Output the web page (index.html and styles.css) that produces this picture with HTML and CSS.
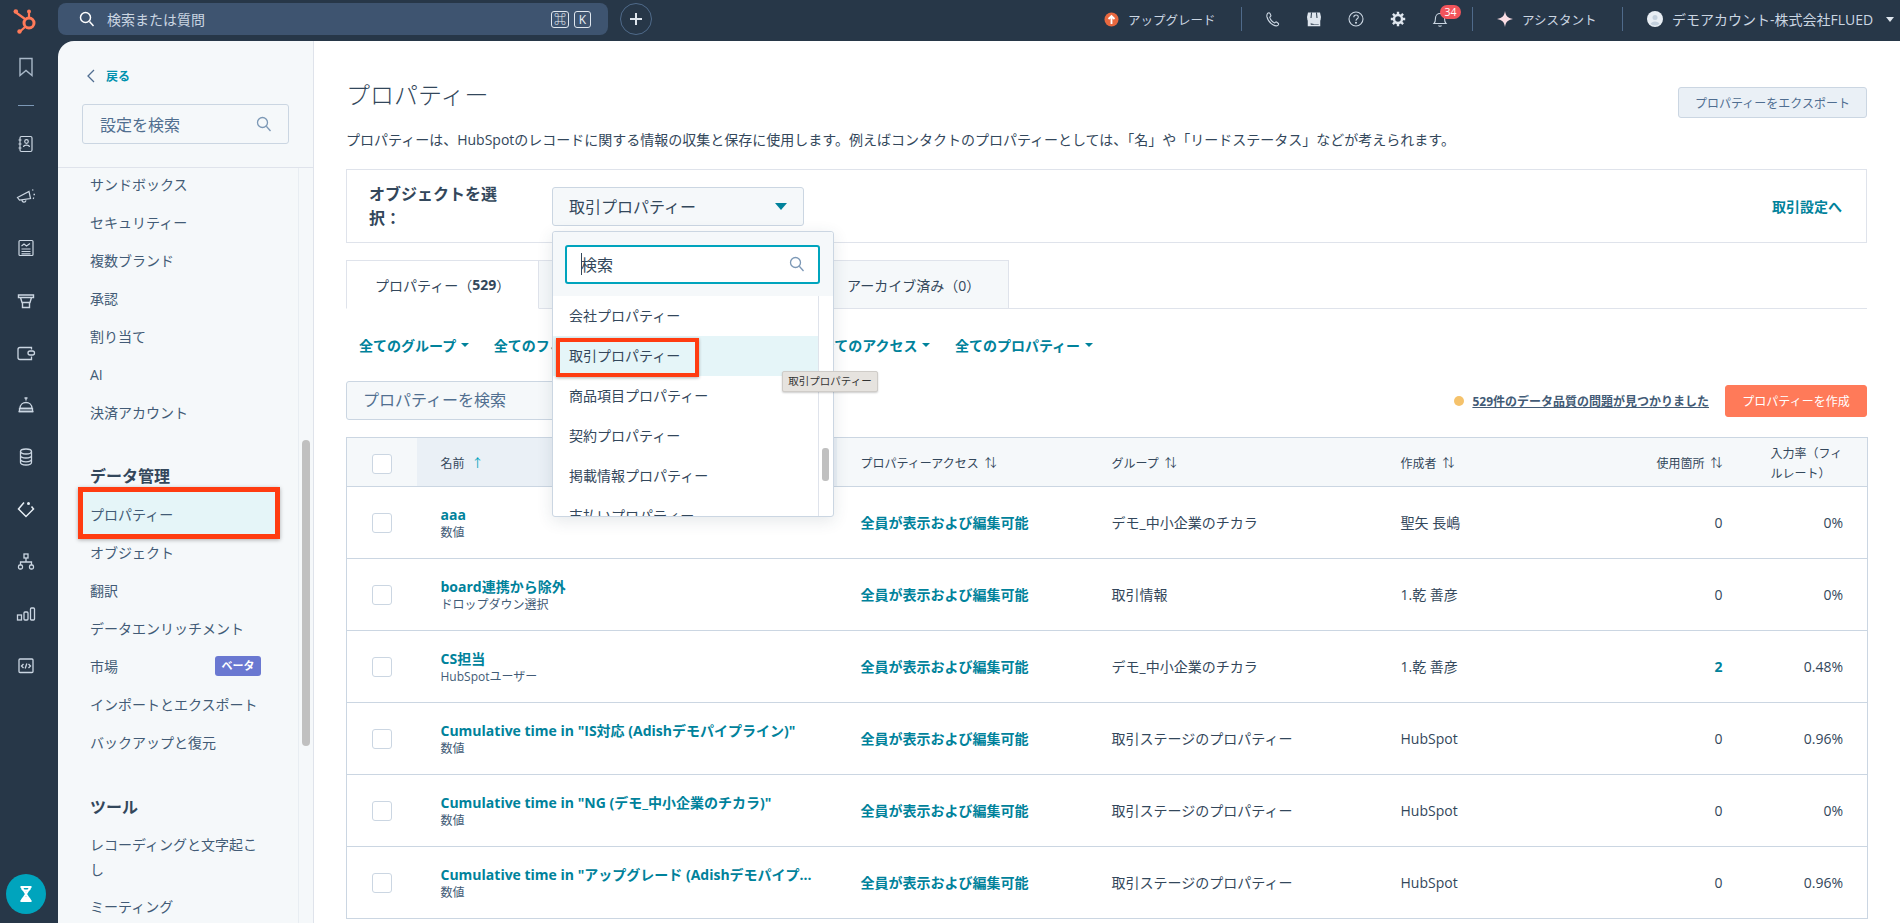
FILE: index.html
```html
<!DOCTYPE html>
<html lang="ja">
<head>
<meta charset="utf-8">
<title>プロパティー</title>
<link rel="stylesheet" href="styles.css">
</head>
<body>
<aside class="rail">
  <svg class="logo" width="24" height="26" viewBox="0 0 24 26" fill="none"><circle cx="16" cy="15" r="5" stroke="#ff7a59" stroke-width="3"/><path d="M16 9V4M12 11 3 4.500M12 19l-5 4.500" stroke="#ff7a59" stroke-width="2.200"/><circle cx="16" cy="3.500" r="2" fill="#ff7a59"/><circle cx="2.800" cy="3.500" r="2.300" fill="#ff7a59"/><circle cx="6.500" cy="23.500" r="2.200" fill="#ff7a59"/></svg>
  <div class="rail-icon first"><svg width="24" height="24" viewBox="0 0 24 24" fill="none" stroke="#a9b8c8" stroke-width="1.400"><path d="M6 3.500h12v17l-6-5-6 5z"/></svg></div>
  <div class="rail-rule"></div>
  <div class="rail-icon contacts"><svg width="24" height="24" viewBox="0 0 24 24" fill="none" stroke="#cbd6e2" stroke-width="1.200"><rect x="6" y="4.500" width="12" height="15" rx="1.500"/><circle cx="12.500" cy="9.500" r="1.800"/><path d="M9.500 15c.5-2.500 5.500-2.500 6 0M4.500 8h3M4.500 12h3M4.500 16h3"/></svg></div>
  <div class="rail-icon"><svg width="24" height="24" viewBox="0 0 24 24" fill="none" stroke="#cbd6e2" stroke-width="1.200"><path d="M3.500 13.500 15 7.500l1.500 7-11 1.500zM8 15.800c0 3 3.500 3 4 .5"/><path d="M18.500 6.500l.5-1M19.500 10.500h1.500M19 14l1 .5" stroke-width="1.400"/></svg></div>
  <div class="rail-icon"><svg width="24" height="24" viewBox="0 0 24 24" fill="none" stroke="#cbd6e2" stroke-width="1.200"><rect x="5" y="4.500" width="14" height="15" rx="1"/><path d="M7.500 10l2.500-2 2.500 2 3.500-2.500M7.500 13h9M7.500 15.500h9M7.500 17.800h9"/></svg></div>
  <div class="rail-icon"><svg width="24" height="24" viewBox="0 0 24 24" fill="none" stroke="#cbd6e2" stroke-width="1.400"><path d="M4.500 6h15v2.500h-15zM6.500 8.500l1.500 5h8l1.500-5M8.500 13.500v5h7v-5"/></svg></div>
  <div class="rail-icon"><svg width="24" height="24" viewBox="0 0 24 24" fill="none" stroke="#cbd6e2" stroke-width="1.300"><path d="M17.500 8.500V6.500H6a2 2 0 0 0-2 2v8a2 2 0 0 0 2 2h11.500v-3"/><rect x="14" y="10" width="6.500" height="4" rx="2"/></svg></div>
  <div class="rail-icon"><svg width="24" height="24" viewBox="0 0 24 24" fill="none" stroke="#cbd6e2" stroke-width="1.300"><path d="M6 15.500c0-8 12-8 12 0zM12 7.500V5M10.500 5h3M4.500 18.500h15"/><path d="M5.500 15.500h13v3h-13z"/></svg></div>
  <div class="rail-icon"><svg width="24" height="24" viewBox="0 0 24 24" fill="none" stroke="#cbd6e2" stroke-width="1.300"><ellipse cx="12" cy="6.500" rx="5.500" ry="2.500"/><path d="M6.500 6.500v11c0 3.300 11 3.300 11 0v-11M6.500 10.500c0 3.300 11 3.300 11 0M6.500 14.300c0 3.300 11 3.300 11 0"/></svg></div>
  <div class="rail-icon"><svg width="24" height="24" viewBox="0 0 24 24" fill="none" stroke="#e6edf4" stroke-width="1.500"><path d="M10 5.500 4.500 12l7.500 7.500 7.500-7.500-2-2.500"/><circle cx="14.500" cy="6.500" r="1.500" fill="#e6edf4" stroke="none"/></svg></div>
  <div class="rail-icon"><svg width="24" height="24" viewBox="0 0 24 24" fill="none" stroke="#cbd6e2" stroke-width="1.300"><rect x="10" y="4" width="4" height="4"/><rect x="4.500" y="15" width="4" height="4" rx="1.500"/><rect x="15.500" y="15" width="4" height="4" rx="1.500"/><path d="M12 8v4M6.500 15v-3h11v3"/></svg></div>
  <div class="rail-icon"><svg width="24" height="24" viewBox="0 0 24 24" fill="none" stroke="#cbd6e2" stroke-width="1.300"><rect x="3.500" y="13" width="4" height="5"/><rect x="10" y="10" width="4" height="8" rx="1"/><rect x="16.500" y="6" width="4" height="12" rx="1"/></svg></div>
  <div class="rail-icon"><svg width="24" height="24" viewBox="0 0 24 24" fill="none" stroke="#cbd6e2" stroke-width="1.300"><rect x="5" y="5" width="14" height="13.500" rx="1"/><path d="M9.500 10l-2 2 2 2M14.500 10l2 2-2 2M12.800 9.500l-1.600 5"/></svg></div>
  <div class="rail-timer"><svg width="20" height="20" viewBox="0 0 20 20" fill="none" stroke="#fff" stroke-width="2"><path d="M4.500 3h11M4.500 17h11M6 3.500c0 4 8 4 8 0M6 3.500 14 16.500M14 3.500 6 16.500"/><path d="M6 16.500c1-4 7-4 8 0z" fill="#fff"/></svg></div>
</aside>

<div class="shell">
  <header class="topbar">
    <div class="global-search">
      <svg width="18" height="18" viewBox="0 0 18 18" fill="none" stroke="#fff" stroke-width="1.500"><circle cx="7.500" cy="7.500" r="5"/><path d="m11.500 11.500 4 4.500"/></svg>
      <span class="global-search-text">検索または質問</span>
      <span class="kbd">⌘</span><span class="kbd">K</span>
    </div>
    <div class="plus"><svg width="14" height="14" viewBox="0 0 14 14" stroke="#dfe6ee" stroke-width="2"><path d="M7 1v12M1 7h12"/></svg></div>
    <div class="top-right">
      <svg class="upgrade-icon" width="15" height="15" viewBox="0 0 15 15"><circle cx="7.500" cy="7.500" r="7" fill="#e8683f"/><path d="M7.500 12V4M4.500 7l3-3 3 3" stroke="#fff" stroke-width="1.800" fill="none"/></svg>
      <span class="top-text upgrade">アップグレード</span>
      <span class="top-div"></span>
      <svg class="ti phone" width="16" height="16" viewBox="0 0 16 16" fill="none" stroke="#cbd6e2" stroke-width="1.100"><path d="M2.500 2.500c1-1 2-1 2.500 0l.8 1.700c.2.500 0 1-.5 1.400l-.6.500c.6 2.500 2.500 4.800 5 5.800l.7-.6c.4-.4 1-.4 1.400-.1l1.300 1c.8.600.6 1.600-.2 2.200-1 .8-3 .5-5-.7-3.500-2-5.500-5.500-6-8-.2-1.300.1-2.400.6-3.200z"/></svg>
      <svg class="ti store" width="16" height="16" viewBox="0 0 16 16"><path d="M2 1.500h12l1 4.500a2 2 0 0 1-14 0z" fill="#dfe6ee"/><path d="M5.500 1.500 5 7M10.500 1.500l.5 5.500" stroke="#253648" stroke-width="1"/><path d="M2.500 8h11v6.500h-11zM4 9.500v5M8.500 9.500h3.500v3H8.500z" fill="none" stroke="#dfe6ee" stroke-width="1.500"/></svg>
      <svg class="ti help" width="16" height="16" viewBox="0 0 16 16" fill="none" stroke="#cbd6e2" stroke-width="1.100"><circle cx="8" cy="8" r="7"/><path d="M5.800 6.200c0-3 4.500-2.800 4.500-.2 0 1.800-2.300 1.800-2.300 3.700"/><circle cx="8" cy="11.800" r=".5"/></svg>
      <svg class="ti gear" width="16" height="16" viewBox="0 0 16 16" fill="none"><circle cx="8" cy="8" r="4" stroke="#dfe6ee" stroke-width="2.400"/><path d="M8 .8v3M8 12.200v3M.8 8h3M12.200 8h3M2.900 2.900l2.100 2.100M11 11l2.100 2.100M2.900 13.100 5 11M11 5l2.100-2.100" stroke="#dfe6ee" stroke-width="2.400"/></svg>
      <span class="bell"><svg width="16" height="18" viewBox="0 0 16 18" fill="none" stroke="#cbd6e2" stroke-width="1.100"><path d="M2 13.500c1.500-1.500 1.500-3 1.500-5.500 0-2.500 2-4.500 4.500-4.500s4.500 2 4.500 4.500c0 2.500 0 4 1.500 5.500zM6.500 15.500c.5 1 2.500 1 3 0"/></svg><span class="badge">34</span></span>
      <span class="top-div after-bell"></span>
      <svg class="ti spark" width="16" height="16" viewBox="0 0 16 16"><path d="M8 0c.8 5 2.500 7 8 8-5.500 1-7.200 3-8 8-.8-5-2.500-7-8-8 5.500-1 7.200-3 8-8z" fill="#fbdde4"/></svg>
      <span class="top-text assistant">アシスタント</span>
      <span class="top-div after-assist"></span>
      <span class="avatar"><svg width="16" height="16" viewBox="0 0 16 16"><circle cx="8" cy="8" r="8" fill="#e8eef4"/><circle cx="8" cy="6.500" r="2.500" fill="#c3d0dd"/><path d="M3.500 13c1-3.500 8-3.500 9 0a8 8 0 0 1-9 0z" fill="#c3d0dd"/></svg></span>
      <span class="top-text account">デモアカウント-株式会社FLUED</span>
      <span class="top-caret"></span>
    </div>
  </header>

  <div class="workspace">
    <nav class="sidebar">
      <div class="side-head">
        <a class="back"><svg width="9" height="14" viewBox="0 0 9 14" fill="none" stroke="#506e91" stroke-width="1.300"><path d="M8 1 2 7l6 6"/></svg><span>戻る</span></a>
        <div class="side-search"><span>設定を検索</span><svg width="16" height="16" viewBox="0 0 16 16" fill="none" stroke="#7c98b6" stroke-width="1.300"><circle cx="6.500" cy="6.500" r="5"/><path d="m10.300 10.300 4.200 4.700"/></svg></div>
      </div>
      <div class="side-scroll">
        <ul class="side-list">
          <li class="side-item">サンドボックス</li>
          <li class="side-item">セキュリティー</li>
          <li class="side-item">複数ブランド</li>
          <li class="side-item">承認</li>
          <li class="side-item">割り当て</li>
          <li class="side-item">AI</li>
          <li class="side-item">決済アカウント</li>
          <li class="side-heading">データ管理</li>
          <li class="side-item active">プロパティー</li>
          <li class="side-item">オブジェクト</li>
          <li class="side-item">翻訳</li>
          <li class="side-item">データエンリッチメント</li>
          <li class="side-item">市場<span class="beta">ベータ</span></li>
          <li class="side-item">インポートとエクスポート</li>
          <li class="side-item">バックアップと復元</li>
          <li class="side-heading tools-heading">ツール</li>
          <li class="side-item wrap">レコーディングと文字起こし</li>
          <li class="side-item">ミーティング</li>
        </ul>
        <div class="side-thumb"></div>
      </div>
    </nav>

    <main class="main">
      <div class="page-head">
        <h1 class="page-title">プロパティー</h1>
        <button class="export">プロパティーをエクスポート</button>
      </div>
      <p class="intro">プロパティーは、HubSpotのレコードに関する情報の収集と保存に使用します。例えばコンタクトのプロパティーとしては、「名」や「リードステータス」などが考えられます。</p>

      <section class="object-box">
        <div class="object-label">オブジェクトを選択：</div>
        <div class="object-select">
          <span>取引プロパティー</span><span class="teal-caret"></span>
          <div class="popup">
            <div class="popup-head">
              <div class="popup-input"><span class="cursor"></span><span>検索</span><svg width="16" height="16" viewBox="0 0 16 16" fill="none" stroke="#7c98b6" stroke-width="1.300"><circle cx="6.500" cy="6.500" r="5"/><path d="m10.300 10.300 4.200 4.700"/></svg></div>
            </div>
            <ul class="popup-list">
              <li>会社プロパティー</li>
              <li class="selected">取引プロパティー</li>
              <li>商品項目プロパティー</li>
              <li>契約プロパティー</li>
              <li>掲載情報プロパティー</li>
              <li>支払いプロパティー</li>
            </ul>
            <div class="popup-thumb"></div>
            <div class="tooltip">取引プロパティー</div>
          </div>
        </div>
        <a class="deal-link">取引設定へ</a>
      </section>

      <div class="tabs">
        <div class="tab current">プロパティー（<b>529</b>）</div>
        <div class="tab mid">グループ（52）</div>
        <div class="tab mid">条件付きロジック</div>
        <div class="tab last">アーカイブ済み（0）</div>
      </div>

      <div class="filters">
        <a class="filter">全てのグループ</a>
        <a class="filter">全てのフィールドタイプ</a>
        <a class="filter">全てのユーザー</a>
        <a class="filter">全てのアクセス</a>
        <a class="filter">全てのプロパティー</a>
      </div>

      <div class="tools">
        <div class="prop-search">プロパティーを検索</div>
        <span class="dot"></span>
        <a class="issue">529件のデータ品質の問題が見つかりました</a>
        <button class="create">プロパティーを作成</button>
      </div>

      <table class="grid">
        <colgroup><col class="c1"><col class="c2"><col class="c3"><col class="c4"><col class="c5"><col class="c6"><col class="c7"></colgroup>
        <thead>
          <tr>
            <th><span class="check"></span></th>
            <th class="sorted">名前<span class="up">↑</span></th>
            <th>プロパティーアクセス<span class="sort">⇅</span></th>
            <th>グループ<span class="sort">⇅</span></th>
            <th>作成者<span class="sort">⇅</span></th>
            <th class="num">使用箇所<span class="sort">⇅</span></th>
            <th>入力率（フィルレート）</th>
          </tr>
        </thead>
        <tbody>
          <tr><td><span class="check"></span></td><td><a class="name">aaa</a><div class="type">数値</div></td><td><a class="access">全員が表示および編集可能</a></td><td>デモ_中小企業のチカラ</td><td>聖矢 長嶋</td><td class="num">0</td><td class="num">0%</td></tr>
          <tr><td><span class="check"></span></td><td><a class="name">board連携から除外</a><div class="type">ドロップダウン選択</div></td><td><a class="access">全員が表示および編集可能</a></td><td>取引情報</td><td>1.乾 善彦</td><td class="num">0</td><td class="num">0%</td></tr>
          <tr><td><span class="check"></span></td><td><a class="name">CS担当</a><div class="type">HubSpotユーザー</div></td><td><a class="access">全員が表示および編集可能</a></td><td>デモ_中小企業のチカラ</td><td>1.乾 善彦</td><td class="num"><a class="access">2</a></td><td class="num">0.48%</td></tr>
          <tr><td><span class="check"></span></td><td><a class="name">Cumulative time in "IS対応 (Adishデモパイプライン)"</a><div class="type">数値</div></td><td><a class="access">全員が表示および編集可能</a></td><td>取引ステージのプロパティー</td><td>HubSpot</td><td class="num">0</td><td class="num">0.96%</td></tr>
          <tr><td><span class="check"></span></td><td><a class="name">Cumulative time in "NG (デモ_中小企業のチカラ)"</a><div class="type">数値</div></td><td><a class="access">全員が表示および編集可能</a></td><td>取引ステージのプロパティー</td><td>HubSpot</td><td class="num">0</td><td class="num">0%</td></tr>
          <tr><td><span class="check"></span></td><td><a class="name">Cumulative time in "アップグレード (Adishデモパイプ...</a><div class="type">数値</div></td><td><a class="access">全員が表示および編集可能</a></td><td>取引ステージのプロパティー</td><td>HubSpot</td><td class="num">0</td><td class="num">0.96%</td></tr>
        </tbody>
      </table>
    </main>
  </div>
</div>
</body>
</html>
```

FILE: styles.css
```css
* { box-sizing: border-box; }
html, body { height: 100%; }
body {
  margin: 0;
  height: 923px;
  overflow: hidden;
  display: flex;
  background: #273748;
  color: #33475b;
  font-family: "Open Sans", "Noto Sans CJK JP", sans-serif;
  font-size: 14px;
}
ul { list-style: none; margin: 0; padding: 0; }
a { color: inherit; }
button { font: inherit; cursor: pointer; }
svg { display: block; flex: none; }

/* rail */
.rail { width: 58px; flex: none; height: 923px; padding-right: 6px; display: flex; flex-direction: column; align-items: center; }
.logo { margin-top: 8px; margin-left: -3px; }
.rail-icon { height: 52.2px; width: 100%; display: flex; align-items: center; justify-content: center; }
.rail-icon.first { height: 38px; margin-top: 14px; }
.rail-rule { width: 16px; height: 1px; background: #7c98b6; margin-top: 19px; }
.rail-icon.contacts { margin-top: 12px; }
.rail-timer {
  margin-top: auto; margin-bottom: 9px;
  width: 40px; height: 40px; border-radius: 50%;
  background: #00a4bd;
  display: flex; align-items: center; justify-content: center;
}

/* shell */
.shell { flex: 1; min-width: 0; display: flex; flex-direction: column; }
.topbar { height: 41px; flex: none; display: flex; align-items: flex-start; padding-top: 3px; }
.global-search {
  width: 550px; height: 32px; border-radius: 8px;
  background: #3e5470; color: #cbd6e2;
  display: flex; align-items: center; padding-left: 20px;
}
.global-search-text { margin-left: 11px; flex: 1; }
.kbd {
  min-width: 17px; height: 17px; margin-right: 5px; padding: 0 2px;
  border: 1px solid #dfe6ee; border-radius: 3px;
  font-size: 12px; line-height: 15px; text-align: center; color: #eaf0f6;
}
.kbd + .kbd { margin-right: 17px; }
.plus {
  width: 32px; height: 32px; margin-left: 12px; border-radius: 50%;
  border: 1px solid #4f6a8a;
  display: flex; align-items: center; justify-content: center;
}
.top-right { margin-left: auto; height: 32px; display: flex; align-items: center; padding-right: 6px; color: #cbd6e2; font-size: 12.500px; }
.top-text { white-space: nowrap; }
.upgrade { margin-left: 9px; width: 88px; }
.assistant { margin-left: 9px; width: 75px; }
.account { margin-left: 9px; width: 204px; font-size: 14px; }
.top-div { width: 1px; height: 24px; background: #4f6a8a; margin: 0 23px 0 25px; }
.ti { margin-right: 26px; }
.ti.phone { margin-right: 25px; }
.ti.spark { margin-right: 0; }
.top-div.after-bell { margin: 0 24px 0 24px; }
.top-div.after-assist { margin: 0 24px 0 25px; }
.bell { position: relative; }
.badge {
  position: absolute; left: 8px; top: -5px;
  min-width: 21px; height: 14px; padding: 0 3px;
  border-radius: 7px; background: #f2545b; color: #fff;
  font-size: 10.500px; line-height: 14px; text-align: center;
}
.top-caret { margin-left: 10px; width: 0; height: 0; border: 4px solid transparent; border-top: 5px solid #dfe6ee; border-bottom: 0; }

.workspace { flex: 1; min-height: 0; display: flex; }

/* sidebar */
.sidebar {
  width: 256px; flex: none; background: #f5f8fa;
  border-top-left-radius: 16px; border-right: 1px solid #dfe3eb;
  display: flex; flex-direction: column;
}
.side-head { height: 127px; flex: none; border-bottom: 1px solid #dfe3eb; padding: 28px 24px 0; }
.back { display: flex; align-items: center; height: 14px; padding-left: 4px; gap: 11px; color: #0091ae; font-size: 12px; font-weight: 700; }
.side-search {
  margin-top: 21px; width: 207px; height: 40px;
  background: #f5f8fa; border: 1px solid #cbd6e2; border-radius: 3px;
  display: flex; align-items: center; justify-content: space-between;
  padding: 0 16px 0 17px; color: #516f90; font-size: 16px;
}
.side-scroll { flex: 1; min-height: 0; position: relative; overflow: hidden; }
.side-scroll::before { content: ""; position: absolute; left: 240px; top: 0; bottom: 0; width: 1px; background: #e8edf2; }
.side-list { margin-top: -3px; padding-left: 32px; padding-right: 52px; }
.side-item { height: 38px; display: flex; align-items: center; justify-content: space-between; position: relative; color: #425b76; z-index: 0; }
.side-item.wrap { height: 62px; line-height: 25px; padding-top: 1px; }
.side-heading { height: 64px; padding-bottom: 6px; display: flex; align-items: flex-end; font-size: 16px; font-weight: 700; color: #33475b; line-height: 26px; }
.side-heading.tools-heading { padding-bottom: 5px; }
.side-item.active::before {
  content: ""; position: absolute; z-index: -1;
  left: -12px; right: -19px; top: -8px; bottom: -6px;
  background: #e5f5f8; border: 5px solid #ff3c11;
  box-shadow: 0 1px 4px rgba(0, 0, 0, .3);
}
.beta {
  width: 46px; height: 20px; border-radius: 3px;
  background: #6a78d1; color: #fff;
  font-size: 11px; font-weight: 700; line-height: 20px; text-align: center;
}
.side-thumb { position: absolute; left: 244px; top: 272px; width: 8px; height: 306px; border-radius: 4px; background: #c0c0c0; }

/* main */
.main { flex: 1; min-width: 0; background: #fff; padding: 36px 33px 0 32px; position: relative; }
.page-head { display: flex; justify-content: space-between; height: 41px; }
.page-title { margin: 0; font-size: 24px; font-weight: 300; line-height: 36px; color: #33475b; }
.export {
  align-self: flex-end; width: 189px; height: 31px;
  background: #eaf0f6; color: #506e91; border: 1px solid #cbd6e2; border-radius: 3px;
  font-size: 12px; padding: 0;
}
.intro { margin: 10px 0 0; line-height: 24px; height: 24px; white-space: nowrap; }

.object-box {
  margin-top: 17px; height: 74px; border: 1px solid #dfe3eb;
  display: flex; align-items: center; padding: 0 24px 0 22px; position: relative; z-index: 5;
}
.object-label { width: 183px; font-size: 16px; font-weight: 700; line-height: 24px; padding-right: 47px; }
.object-select {
  width: 252px; height: 39px; position: relative;
  background: #f5f8fa; border: 1px solid #cbd6e2; border-radius: 3px;
  display: flex; align-items: center; justify-content: space-between;
  padding: 0 16px 0 16px; font-size: 16px; color: #33475b;
}
.teal-caret { width: 0; height: 0; border: 6px solid transparent; border-top: 7px solid #00829b; border-bottom: 0; }
.deal-link { margin-left: auto; color: #00829b; font-weight: 700; }

.popup {
  position: absolute; left: -1px; top: 43px; width: 282px; height: 286px;
  background: #fff; border: 1px solid #cbd6e2; border-radius: 3px;
  box-shadow: 0 4px 16px rgba(45, 62, 80, .12);
  font-size: 14px;
}
.popup-head { height: 64px; background: #f5f8fa; padding: 13px 12px 0; border-radius: 3px 3px 0 0; }
.popup-input {
  width: 255px; height: 39px; background: #fff; border: 2px solid #00a4bd; border-radius: 3px;
  display: flex; align-items: center; padding: 0 13px 0 14px; font-size: 16px;
}
.popup-input span:nth-child(2) { flex: 1; }
.cursor { width: 1px; height: 22px; background: #33475b; margin-right: -1px; }
.popup-list { height: 220px; overflow: hidden; width: 266px; border-right: 1px solid #dfe3eb; }
.popup-list li { height: 40px; padding: 0 0 2px 16px; display: flex; align-items: center; position: relative; color: #33475b; }
.popup-list .selected { background: #e5f5f8; }
.popup-list .selected::after {
  content: ""; position: absolute; left: 3px; top: 2px; width: 135px; height: 31px;
  border: 4px solid #ff3c11; box-shadow: 0 1px 3px rgba(0, 0, 0, .3);
}
.popup-thumb { position: absolute; left: 269px; top: 216px; width: 7px; height: 33px; border-radius: 3px; background: #c0c0c0; }
.tooltip {
  position: absolute; left: 229px; top: 139px; width: 96px; height: 21px;
  background: #e6e3df; border: 1px solid #cfccc8; border-radius: 2px;
  box-shadow: 0 1px 2px rgba(0, 0, 0, .2);
  font-size: 10.500px; line-height: 19px; text-align: center; color: #333;
  white-space: nowrap;
}

.tabs { margin-top: 17px; height: 49px; display: flex; border-bottom: 1px solid #dfe3eb; }
.tab { height: 49px; display: flex; align-items: center; border: 1px solid #dfe3eb; border-left: 0; background: #f5f8fa; padding-left: 28px; white-space: nowrap; }
.tab.current { width: 193px; background: #fff; border-left: 1px solid #dfe3eb; border-bottom-color: #fff; }
.tab.mid { width: 140px; }
.tab.last { width: 190px; }
.tab b { font-weight: 700; }

.filters { margin-top: 21px; height: 30px; padding-left: 13px; display: flex; align-items: center; gap: 24.500px; }
.filter { display: flex; align-items: center; gap: 5px; color: #00829b; font-weight: 700; white-space: nowrap; }
.filter::after { content: ""; width: 0; height: 0; border: 4px solid transparent; border-top: 4px solid #00829b; border-bottom: 0; }

.tools { margin-top: 21px; height: 39px; display: flex; align-items: center; }
.prop-search {
  width: 300px; height: 39px; background: #f5f8fa; border: 1px solid #cbd6e2; border-radius: 3px;
  padding-left: 16px; line-height: 37px; font-size: 16px; color: #516f90;
}
.dot { margin-left: auto; width: 10px; height: 10px; border-radius: 50%; background: #f5c26b; }
.issue { margin-left: 8px; color: #425b76; font-size: 12px; font-weight: 700; text-decoration: underline; }
.create {
  margin-left: 16px; width: 142px; height: 32px;
  background: #ff7a59; color: #fff; border: 1px solid #ff7a59; border-radius: 3px;
  font-size: 12px; padding: 0;
}

.grid { margin-top: 17px; width: 1521px; table-layout: fixed; border-collapse: collapse; border: 1px solid #cbd6e2; }
.c1 { width: 70px; } .c2 { width: 420px; } .c3 { width: 251px; } .c4 { width: 289px; }
.c5 { width: 224px; } .c6 { width: 146px; } .c7 { width: 121px; }
.grid th {
  height: 49px; background: #f5f8fa; border-bottom: 1px solid #cbd6e2;
  padding: 4px 24px 0; text-align: left; font-size: 12px; font-weight: 400; line-height: 20px; color: #33475b;
}
.grid th:first-child, .grid td:first-child { padding: 0 0 0 25px; }
.grid th:first-child { padding-top: 4px; }
.grid th.sorted { background: #eaf0f6; }
.grid th.num { text-align: right; }
.grid td { height: 72px; padding: 0 24px; border-bottom: 1px solid #cbd6e2; color: #33475b; line-height: 20px; white-space: nowrap; }
.grid td.num { text-align: right; }
.grid th:last-child { padding-right: 20px; }
.check { display: block; width: 20px; height: 20px; background: #fff; border: 1px solid #cbd6e2; border-radius: 3px; }
.name { display: block; color: #00829b; font-weight: 700; line-height: 20px; }
.type { font-size: 12px; line-height: 16px; color: #425b76; }
.access { color: #00829b; font-weight: 700; }
.up { margin-left: 7px; color: #00a4bd; }
.sort { margin-left: 6px; }
```
